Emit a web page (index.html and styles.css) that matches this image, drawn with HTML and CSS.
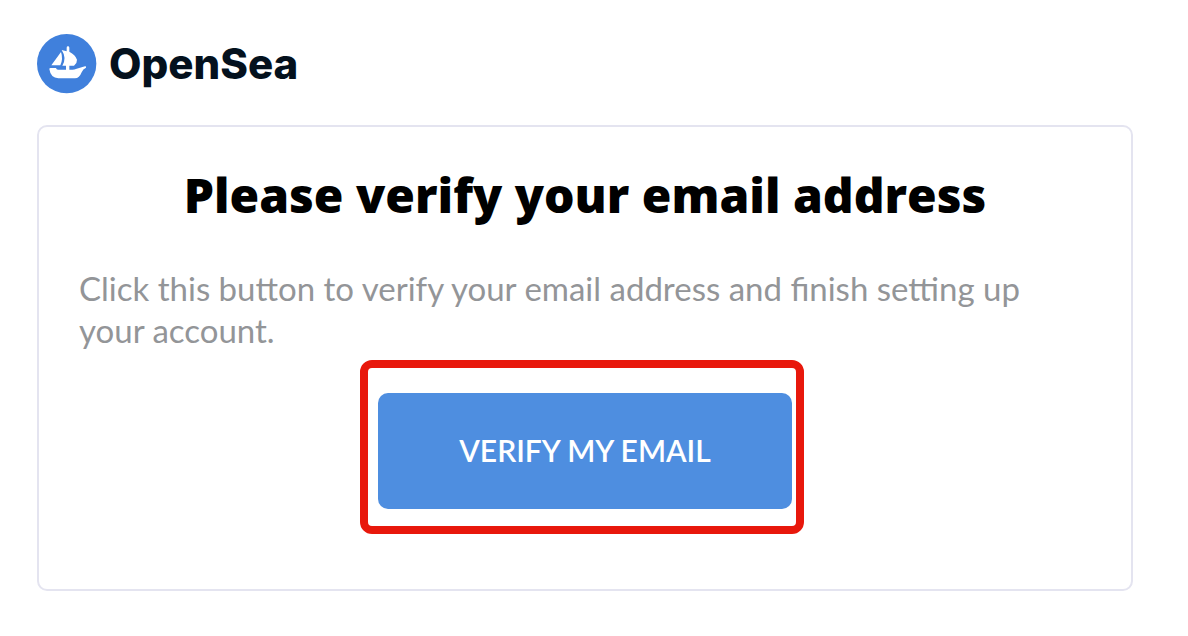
FILE: index.html
```html
<!DOCTYPE html>
<html lang="en">
<head>
<meta charset="utf-8">
<title>Verify your email address</title>
<link rel="stylesheet" href="styles.css">
</head>
<body>
<header class="brand">
  <svg class="brand-mark" viewBox="30 29 180 180" aria-hidden="true">
    <circle cx="119" cy="118" r="89" fill="#4080dc"/>
    <path fill="#fff" d="M102 83Q109 103 100 123H73ZM104 77L119 81V70Q119 66 123 66Q127 66 127 70V82Q145 91 150 106Q151 115 141 124H127V136H136Q142 136 149 133L174 126Q178 125 177 130Q168 134 164 144Q157 162 144 162H94Q71 161 67 134Q67 131 71 131H87Q88 136 93 136H117V124H106Q120 101 104 77Z"/>
  </svg>
  <span class="brand-name">OpenSea</span>
</header>
<main class="card">
  <h1 class="title">Please verify your email address</h1>
  <p class="message">Click this button to verify your email address and finish setting up your account.</p>
  <div class="action">
    <button class="verify" type="button">VERIFY MY EMAIL</button>
    <span class="highlight"></span>
  </div>
</main>
</body>
</html>
```
FILE: styles.css
```css
* {
  box-sizing: border-box;
}

body {
  margin: 0;
  padding: 34px 55px 45px 37px;
  background: #fff;
  font-family: Lato, sans-serif;
}

.brand {
  display: flex;
  align-items: center;
  gap: 12px;
  margin-bottom: 31px;
}

.brand-mark {
  width: 60px;
  height: 60px;
}

.brand-name {
  color: #04111d;
  font-family: Inter, sans-serif;
  font-size: 42px;
  font-weight: 800;
  line-height: 60px;
}

.card {
  padding: 38px 40px 80px;
  border: 2px solid #e4e4f0;
  border-radius: 10px;
}

.title {
  margin: 0 0 42px;
  color: #000;
  font-family: "Open Sans", sans-serif;
  font-size: 48px;
  font-weight: 800;
  line-height: 60px;
  text-align: center;
}

.message {
  margin: 0 0 42px;
  padding-right: 40px;
  color: #939598;
  font-size: 33px;
  line-height: 42px;
}

.action {
  position: relative;
  width: fit-content;
  margin: 0 auto;
}

.verify {
  display: block;
  padding: 39px 81px 41px;
  border: 0;
  border-radius: 10px;
  background: #4e8ee0;
  color: #fff;
  font-family: inherit;
  font-size: 30px;
  font-weight: 600;
  line-height: 36px;
}

.highlight {
  position: absolute;
  inset: -33px -12px -25px -18px;
  border: 8px solid #e8180c;
  border-radius: 12px;
  pointer-events: none;
}
```
